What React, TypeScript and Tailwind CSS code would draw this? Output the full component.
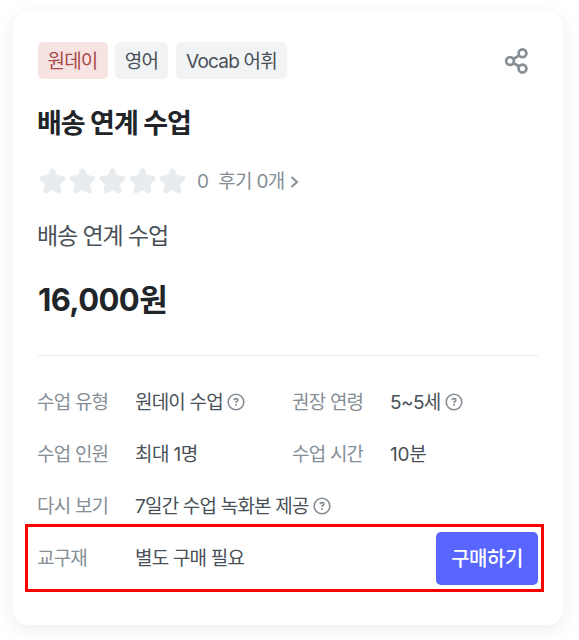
import React from 'react';

function Star() {
    return (
        <svg width="30" height="30" viewBox="0 0 30 30" fill="#e9ecef" stroke="#e9ecef" strokeWidth="5" strokeLinejoin="round">
            <path d="M14.5 4.8L17.2 11.2L25 12.4L19.3 17.3L21 24.8L14.5 21.2L8 24.8L9.7 17.3L4 12.4L11.8 11.2Z" />
        </svg>
    );
}

function ShareIcon() {
    return (
        <svg width="26" height="28" viewBox="0 0 26 28" fill="none" stroke="#868e96" strokeWidth="2.7">
            <circle cx="6" cy="14" r="3.9" />
            <circle cx="18.5" cy="6.3" r="3.9" />
            <circle cx="18.5" cy="21.5" r="3.9" />
            <path d="M9.4 12L15.2 8.4M9.4 16L15.2 19.5" />
        </svg>
    );
}

function HelpIcon() {
    return (
        <svg width="18" height="18" viewBox="0 0 18 18" fill="none" stroke="#868e96" strokeWidth="1.6" className="ml-1 shrink-0">
            <circle cx="9" cy="9" r="7.8" />
            <path d="M7.2 7.3C7.2 6.2 7.9 5.6 9 5.6S10.8 6.3 10.8 7.2C10.8 8.3 9 8.4 9 9.9" strokeWidth="1.7" />
            <circle cx="9" cy="12" r="1" fill="#868e96" stroke="none" />
        </svg>
    );
}

type InfoProps = {
    label: string;
    value: string;
    help?: boolean;
    className?: string;
    valueClass?: string;
};

function Info({ label, value, help, className = '', valueClass = '' }: InfoProps) {
    return (
        <div className={`flex h-7 items-center ${className}`}>
            <span className="-ml-px w-[98px] pt-px text-[#868e96]">{label}</span>
            <span className={`pt-px text-[#495057] ${valueClass}`}>{value}</span>
            {help && <HelpIcon />}
        </div>
    );
}

function App() {
    return (
        <div className="h-[640px] w-[579px] overflow-hidden bg-white pl-[13px] pt-[11px] font-['Inter','Noto_Sans_CJK_KR',sans-serif] whitespace-nowrap">
            <div className="h-[614px] w-[550px] rounded-2xl bg-white px-[25px] pt-[31px] shadow-[0_4px_20px_rgba(0,0,0,0.08)]">
                <div className="flex items-center">
                    <div className="flex h-[37px] items-center text-[19px] leading-[37px] tracking-[-0.8px] text-[#495057]">
                        <span className="h-[37px] w-[70px] rounded-[5px] bg-[#f7e3e2] pt-px pr-px text-center text-[#a74b4b]">원데이</span>
                        <span className="ml-[7px] h-[37px] w-[53px] rounded-[5px] bg-[#f1f3f5] pt-px text-center">영어</span>
                        <span className="ml-2 h-[37px] w-[111px] rounded-[5px] bg-[#f1f3f5] pt-px text-center">Vocab 어휘</span>
                    </div>
                    <button className="ml-auto mr-2">
                        <ShareIcon />
                    </button>
                </div>

                <h1 className="mt-[27px] -ml-px text-[27px] leading-9 font-bold tracking-[-1px] text-[#212529]">배송 연계 수업</h1>

                <div className="mt-6 flex h-[30px] items-center text-[19px] leading-7 tracking-[-0.7px] text-[#868e96]">
                    <div className="flex">
                        {[1, 2, 3, 4, 5].map((n) => (
                            <Star key={n} />
                        ))}
                    </div>
                    <span className="ml-[9px] pt-0.5">0</span>
                    <span className="ml-[10px] pt-0.5">후기 0개</span>
                    <svg width="10" height="14" viewBox="0 0 10 14" fill="none" stroke="#868e96" strokeWidth="2" className="ml-[5px] mt-px">
                        <path d="M1.5 2L7 7L1.5 12" />
                    </svg>
                </div>

                <p className="mt-6 -ml-px text-[23px] leading-8 tracking-[-1.1px] text-[#495057]">배송 연계 수업</p>
                <p className="mt-[26px] text-[31px] leading-[44px] font-bold tracking-[-0.6px] text-[#212529]">16,000원</p>

                <hr className="mt-[33px] border-[#e9ecef]" />

                <div className="mt-8 grid grid-cols-[255px_245px] gap-y-6 text-[19px] leading-7 tracking-[-0.8px]">
                    <Info label="수업 유형" value="원데이 수업" help />
                    <Info label="권장 연령" value="5~5세" help valueClass="tracking-[-0.6px]" />
                    <Info label="수업 인원" value="최대 1명" valueClass="tracking-[-0.6px]" />
                    <Info label="수업 시간" value="10분" valueClass="tracking-[-0.2px]" />
                    <Info label="다시 보기" value="7일간 수업 녹화본 제공" help className="col-span-2" />
                </div>

                <div className="relative mt-3 flex items-center justify-between text-[19px] leading-7 tracking-[-0.8px]">
                    <Info label="교구재" value="별도 구매 필요" />
                    <button className="h-[53px] w-[102px] rounded-[5px] bg-[#5865ff] text-[20px] font-medium tracking-[-0.5px] text-white">구매하기</button>
                    <div className="pointer-events-none absolute -top-2 -right-[6px] -bottom-[7px] -left-[13px] border-3 border-[#ff0000]" />
                </div>
            </div>
        </div>
    );
}

export default App;
